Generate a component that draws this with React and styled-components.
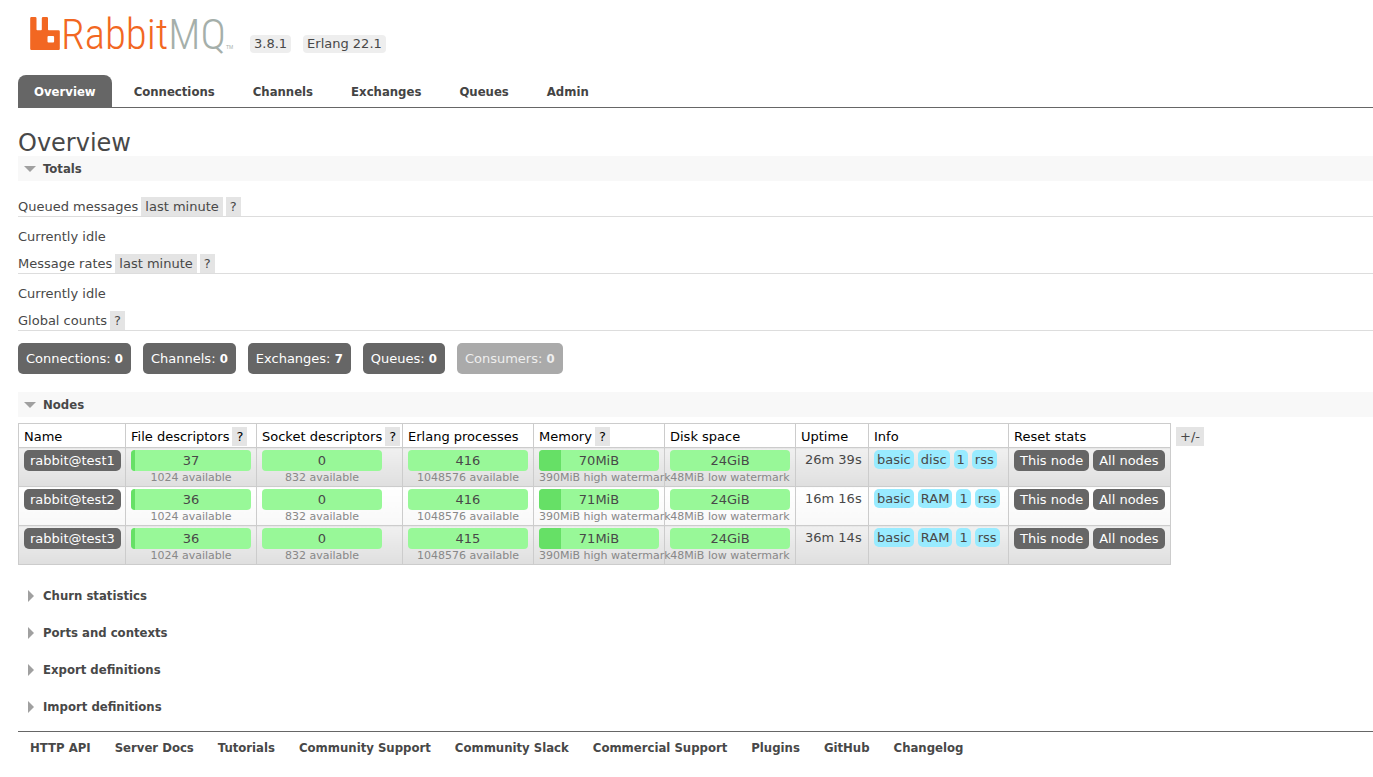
import { useState } from 'react';
import styled, { createGlobalStyle } from 'styled-components';

const Colors = {
  text: '#484848',
  dark: '#666',
  tag: '#e4e4e4',
  border: '#ccc',
  line: '#ddd',
};

const boldFont = "'DejaVu Sans Condensed', 'Noto Sans', sans-serif";

const tabs = ['Overview', 'Connections', 'Channels', 'Exchanges', 'Queues', 'Admin'];

const counts = [
  { label: 'Connections', value: 0 },
  { label: 'Channels', value: 0 },
  { label: 'Exchanges', value: 7 },
  { label: 'Queues', value: 0 },
  { label: 'Consumers', value: 0, disabled: true },
];

const columns = [
  { title: 'Name', width: 107 },
  { title: 'File descriptors', width: 131, help: true },
  { title: 'Socket descriptors', width: 146, help: true },
  { title: 'Erlang processes', width: 131 },
  { title: 'Memory', width: 131, help: true },
  { title: 'Disk space', width: 131 },
  { title: 'Uptime', width: 73 },
  { title: 'Info', width: 140 },
  { title: 'Reset stats', width: 162 },
];

const nodes = [
  { name: 'rabbit@test1', files: 37, procs: 416, memory: 70, uptime: '26m 39s', type: 'disc' },
  { name: 'rabbit@test2', files: 36, procs: 416, memory: 71, uptime: '16m 16s', type: 'RAM' },
  { name: 'rabbit@test3', files: 36, procs: 415, memory: 71, uptime: '36m 14s', type: 'RAM' },
];

const closedSections = ['Churn statistics', 'Ports and contexts', 'Export definitions', 'Import definitions'];

const footerLinks = [
  'HTTP API', 'Server Docs', 'Tutorials', 'Community Support', 'Community Slack',
  'Commercial Support', 'Plugins', 'GitHub', 'Changelog',
];

const Logo = () => (
  <SLogo width="208" height="40" viewBox="0 0 208 40" role="img" aria-label="RabbitMQ">
    <path
      fill="#f26722"
      fillRule="evenodd"
      d="M1.500 4h3.700q1.300 0 1.300 1.300v11.200q0 .8.800.8h3.700q.8 0 .8-.8V5.300q0-1.300 1.300-1.300h3.600q1.300 0 1.300 1.300v11.200q0 .8.800.8h9.700q1.300 0 1.300 1.300v17.100q0 1.300-1.300 1.300H1.500q-1.300 0-1.300-1.300V5.300Q.2 4 1.500 4zM18.500 23q-1 0-1 1v4.600q0 1 1 1h4.600q1 0 1-1V24q0-1-1-1z"
    />
    <text x="31" y="36" className="logo__name">
      <tspan fill="#f26722">Rabbit</tspan>
      <tspan fill="#a5afaa">MQ</tspan>
    </text>
    <text x="196" y="36" className="logo__tm">TM</text>
  </SLogo>
);

const Bar = ({ value, note, percent = 0 }) => (
  <SBar>
    <div className="bar">
      <div className="bar__fill" style={{ width: `${percent}%` }} />
      <span className="bar__value">{value}</span>
    </div>
    <small>{note}</small>
  </SBar>
);

const Section = ({ title, open = false, children }) => {
  const [isOpen, setIsOpen] = useState(open);

  return (
    <section>
      <SSectionTitle $open={isOpen}>
        <button type="button" aria-expanded={isOpen} onClick={() => setIsOpen(!isOpen)}>
          <svg width="12" height="12" viewBox="0 0 12 12" aria-hidden="true">
            <path fill="#a0a0a0" d={isOpen ? 'M0 3h12L6 9z' : 'M4 0l6 6-6 6z'} />
          </svg>
          {title}
        </button>
      </SSectionTitle>
      {isOpen && children}
    </section>
  );
};

const App = () => {
  const [active, setActive] = useState('Overview');

  return (
    <>
      <GlobalStyle />
      <SPage>
        <SHeader>
          <Logo />
          <SVersion>3.8.1</SVersion>
          <SVersion>Erlang 22.1</SVersion>
        </SHeader>
        <STabs>
          {tabs.map((tab) => (
            <STab key={tab} href="#" $active={tab === active} onClick={() => setActive(tab)}>
              {tab}
            </STab>
          ))}
        </STabs>
        <main>
          <STitle>Overview</STitle>
          <Section title="Totals" open>
            <STotals>
              <SSubTitle>
                Queued messages <STag type="button">last minute</STag> <STag type="button">?</STag>
              </SSubTitle>
              <SIdle>Currently idle</SIdle>
              <SSubTitle>
                Message rates <STag type="button">last minute</STag> <STag type="button">?</STag>
              </SSubTitle>
              <SIdle>Currently idle</SIdle>
              <SSubTitle>
                Global counts <STag type="button">?</STag>
              </SSubTitle>
              <SCounts>
                {counts.map(({ label, value, disabled }) => (
                  <SCount key={label} type="button" disabled={disabled}>
                    {label}: <strong>{value}</strong>
                  </SCount>
                ))}
              </SCounts>
            </STotals>
          </Section>
          <Section title="Nodes" open>
            <SNodes>
              <STable>
                <colgroup>
                  {columns.map(({ title, width }) => <col key={title} width={width} />)}
                </colgroup>
                <thead>
                  <tr>
                    {columns.map(({ title, help }) => (
                      <th key={title} scope="col">
                        <div className="head">
                          {title}
                          {help && <STag type="button">?</STag>}
                        </div>
                      </th>
                    ))}
                  </tr>
                </thead>
                <tbody>
                  {nodes.map((node) => (
                    <tr key={node.name}>
                      <td><SButton type="button">{node.name}</SButton></td>
                      <td><Bar value={node.files} note="1024 available" percent={3} /></td>
                      <td><Bar value={0} note="832 available" /></td>
                      <td><Bar value={node.procs} note="1048576 available" /></td>
                      <td><Bar value={`${node.memory}MiB`} note="390MiB high watermark" percent={18} /></td>
                      <td><Bar value="24GiB" note="48MiB low watermark" /></td>
                      <td><SUptime>{node.uptime}</SUptime></td>
                      <td>
                        <SGroup>
                          {['basic', node.type, '1', 'rss'].map((info) => <SInfo key={info}>{info}</SInfo>)}
                        </SGroup>
                      </td>
                      <td>
                        <SGroup>
                          <SButton type="button">This node</SButton>
                          <SButton type="button">All nodes</SButton>
                        </SGroup>
                      </td>
                    </tr>
                  ))}
                </tbody>
              </STable>
              <STag type="button">+/-</STag>
            </SNodes>
          </Section>
          <SClosed>
            {closedSections.map((title) => <Section key={title} title={title} />)}
          </SClosed>
        </main>
        <SFooter>
          {footerLinks.map((link) => <a key={link} href="#">{link}</a>)}
        </SFooter>
      </SPage>
    </>
  );
};

export default App;

const GlobalStyle = createGlobalStyle`
  * {
    box-sizing: border-box;
  }
  body {
    margin: 0;
    background-color: #fff;
    color: ${Colors.text};
    font: 13px/18px 'DejaVu Sans', Verdana, sans-serif;
  }
  button {
    border: 0;
    padding: 0;
    font: inherit;
    color: inherit;
    background: none;
    white-space: nowrap;
    cursor: pointer;
  }
  a {
    color: inherit;
    text-decoration: none;
  }
  strong {
    font-family: ${boldFont};
  }
`;

const SPage = styled.div`
  padding-left: 18px;
`;

const SHeader = styled.header`
  display: flex;
  align-items: flex-end;
  gap: 12px;
  padding: 13px 0 22px 12px;
`;

const SLogo = styled.svg`
  flex: none;
  overflow: visible;
  .logo__name {
    font-family: 'Roboto Condensed', 'Liberation Sans Narrow', sans-serif;
    font-size: 43px;
    font-weight: 300;
  }
  .logo__tm {
    font-family: 'Liberation Sans', sans-serif;
    font-size: 5px;
    fill: #a5afaa;
  }
`;

const SVersion = styled.span`
  padding: 0 4px;
  border-radius: 4px;
  background-color: #eee;
`;

const STabs = styled.nav`
  display: flex;
  gap: 6px;
  border-bottom: 1px solid ${Colors.dark};
`;

const STab = styled.a`
  padding: 8px 16px 6px;
  border-radius: 8px 8px 0 0;
  background-color: ${({ $active }) => ($active ? Colors.dark : 'transparent')};
  color: ${({ $active }) => ($active ? '#fff' : '#444')};
  font-family: ${boldFont};
  font-weight: bold;
`;

const STitle = styled.h1`
  margin: 22px 0 0;
  font-size: 24px;
  font-weight: normal;
  line-height: 26px;
`;

const SSectionTitle = styled.h2`
  margin: 0;
  font: bold 13px/25px ${boldFont};
  background-color: ${({ $open }) => ($open ? '#f8f8f8' : 'transparent')};
  button {
    display: flex;
    align-items: center;
    gap: 7px;
    width: 100%;
    padding-left: 6px;
    text-align: left;
  }
`;

const STotals = styled.div`
  padding: 16px 0 18px;
`;

const SSubTitle = styled.h3`
  display: flex;
  gap: 3px;
  height: 20px;
  margin: 0;
  border-bottom: 1px solid ${Colors.line};
  font-size: 13px;
  font-weight: normal;
  line-height: 20px;
`;

const STag = styled.button`
  flex: none;
  height: 19px;
  padding: 0 4px;
  background-color: ${Colors.tag};
  line-height: 18px;
`;

const SIdle = styled.p`
  margin: 0;
  padding-top: 2px;
  line-height: 35px;
`;

const SCounts = styled.div`
  display: flex;
  flex-wrap: wrap;
  gap: 12px;
  padding-top: 12px;
`;

const SCount = styled.button`
  height: 31px;
  padding: 0 8px;
  border-radius: 5px;
  background-color: ${Colors.dark};
  color: #fff;
  &:disabled {
    background-color: #aaa;
    color: #eee;
  }
`;

const SNodes = styled.div`
  display: flex;
  align-items: flex-start;
  gap: 5px;
  padding: 6px 0 18px;
  > ${STag} {
    margin-top: 4px;
  }
`;

const STable = styled.table`
  flex: none;
  table-layout: fixed;
  width: 1153px;
  border-collapse: collapse;
  th,
  td {
    padding: 2px 5px 1px;
    border: 1px solid ${Colors.border};
    text-align: left;
    vertical-align: top;
  }
  th {
    padding: 3px 5px 2px;
    color: #000;
    font-weight: normal;
    line-height: 20px;
    white-space: nowrap;
  }
  td {
    height: 39px;
    background: linear-gradient(#fff, #f8f8f8);
  }
  tr:nth-child(odd) td {
    background: linear-gradient(#f0f0f0, #dfdfdf);
  }
  .head {
    display: flex;
    gap: 3px;
    height: 18px;
  }
`;

const SButton = styled.button`
  display: block;
  height: 21px;
  padding: 0 6px;
  border-radius: 5px;
  background-color: ${Colors.dark};
  color: #fff;
`;

const SGroup = styled.div`
  display: flex;
  gap: 4px;
`;

const SInfo = styled.span`
  height: 19px;
  padding: 0 3px;
  border-radius: 5px;
  background-color: #99ebff;
  line-height: 20px;
`;

const SUptime = styled.span`
  display: block;
  padding-left: 4px;
  line-height: 20px;
  white-space: nowrap;
`;

const SBar = styled.div`
  width: 120px;
  .bar {
    position: relative;
    height: 21px;
    overflow: hidden;
    border-radius: 4px;
    background-color: #98f898;
    text-align: center;
    &__fill {
      position: absolute;
      inset: 0 auto 0 0;
      background-color: #66e066;
    }
    &__value {
      position: relative;
      line-height: 21px;
    }
  }
  small {
    display: block;
    color: #888;
    font-size: 11px;
    line-height: 14px;
    text-align: center;
    white-space: nowrap;
  }
`;

const SClosed = styled.div`
  display: grid;
  gap: 12px;
  padding-bottom: 12px;
`;

const SFooter = styled.footer`
  display: flex;
  flex-wrap: wrap;
  gap: 24px;
  padding: 7px 12px 20px;
  border-top: 1px solid ${Colors.dark};
  font-family: ${boldFont};
  font-weight: bold;
`;
